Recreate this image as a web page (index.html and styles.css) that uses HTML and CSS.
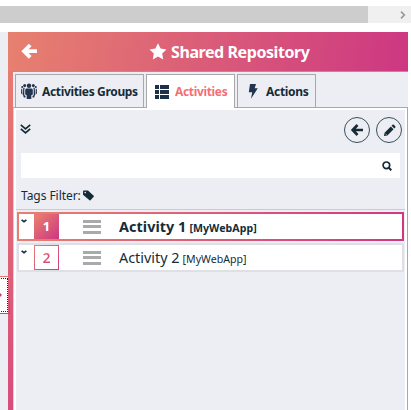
FILE: index.html
```html
<!DOCTYPE html>
<html lang="en">
<head>
<meta charset="utf-8">
<title>Shared Repository</title>
<link rel="stylesheet" href="styles.css">
</head>
<body>
<div class="scrollbar"><div class="thumb"></div><svg width="6" height="8" viewBox="0 0 6 8"><path d="M1 .7l3.3 3.3L1 7.3" fill="none" stroke="#999" stroke-width="1.7"/></svg></div>
<div class="main">
  <div class="gutter"><div class="handle"><svg width="3" height="6" viewBox="0 0 3 6"><path d="M0 1l2 2-2 2z" fill="#cf3a82"/></svg></div></div>
  <section class="panel">
    <header>
      <svg class="back" width="17" height="17" viewBox="0 0 17 17"><path d="M10.200 2L4 8.200l6.200 6.200M4.500 8.200H17" fill="none" stroke="#fff" stroke-width="3.800"/></svg>
      <svg class="star" width="18" height="17" viewBox="0 0 18 17"><path d="M9 .3l2.6 5.3 5.9.8-4.3 4.1 1 5.9L9 13.6l-5.2 2.8 1-5.9L.5 6.4l5.9-.8z" fill="#fff"/></svg>
      <h1>Shared Repository</h1>
    </header>
    <div class="body">
      <nav>
        <div class="tab groups"><svg width="16" height="17" viewBox="0 0 16 17" fill="#22344e"><circle cx="8" cy="2.800" r="2.200"/><circle cx="3.700" cy="2.500" r="1.500"/><circle cx="12.300" cy="2.500" r="1.500"/><circle cx="1.200" cy="4" r="1"/><circle cx="14.800" cy="4" r="1"/><path d="M5.200 5.500h5.600l1 1v5l-1.500.8V16H5.700v-3.700L4.200 11.500v-5zM2.300 4.700h1.600l-.6 1.300v6l1.200 1v1.500H2.800L1.800 11zM13.700 4.700h-1.600l.6 1.300v6l-1.200 1v1.500h1.700L14.200 11zM.3 5.700h1V12L0 10zM15.700 5.700h-1V12l1.300-2z"/></svg><span>Activities Groups</span></div>
        <div class="tab active"><svg width="14" height="14" viewBox="0 0 14 14" fill="#1d3049"><path d="M0 0h4v4H0zM5 0h9v4H5zM0 5h4v4H0zM5 5h9v4H5zM0 10h4v4H0zM5 10h9v4H5z"/></svg><span>Activities</span></div>
        <div class="tab actions"><svg width="10" height="15" viewBox="0 0 10 15"><path d="M2 0h6L6.700 4.200H9.800L3 14.700l1.200-6.500H.8z" fill="#22344e"/></svg><span>Actions</span></div>
      </nav>
      <div class="frame"><div class="content">
        <div class="toolbar">
          <svg class="expand" width="11" height="10" viewBox="0 0 11 10"><path d="M.8.8l4.700 4 4.700-4M.8 4.800l4.700 4 4.700-4" fill="none" stroke="#152b38" stroke-width="1.700"/></svg>
          <span class="round"><svg width="14" height="14" viewBox="0 0 14 14"><path d="M7.500 2L2.700 7l4.800 5M3 7h10" fill="none" stroke="#152b38" stroke-width="2.700"/></svg></span>
          <span class="round"><svg width="13" height="13" viewBox="0 0 14 14"><path d="M1 13l.7-3.700 6.700-6.700 3 3-6.700 6.700zM9.200 1.800l1-1q.8-.7 1.500 0l1.500 1.500q.7.700 0 1.500l-1 1z" fill="#152b38"/><path d="M2.700 10.500l.9.900" stroke="#edeef3"/></svg></span>
        </div>
        <div class="search"><svg width="10" height="10" viewBox="0 0 10 10" fill="none" stroke="#152b38"><circle cx="4.400" cy="4.300" r="3.300" stroke-width="1.700"/><path d="M6.500 6.500L9.300 9.300" stroke-width="2"/></svg></div>
        <div class="tags"><span>Tags Filter:</span><svg width="11" height="11" viewBox="0 0 11 11"><path d="M0 1.500Q0 .5 1 .5h4l5.700 5.200q.5.500 0 1L7.500 10.300q-.5.500-1 0L0 4.800z" fill="#152b38"/><circle cx="2.200" cy="2.600" r=".8" fill="#edeef3"/></svg></div>
        <div class="list">
          <div class="row selected"><svg class="chev" width="6" height="4" viewBox="0 0 6 4"><path d="M.6.800L3 2.700 5.400.800" fill="none" stroke="#152b38" stroke-width="1.500"/></svg><span class="num">1</span><span class="grip"><i></i><i></i><i></i></span><span class="name">Activity 1</span><span class="app">[MyWebApp]</span></div>
          <div class="row"><svg class="chev" width="6" height="4" viewBox="0 0 6 4"><path d="M.6.800L3 2.700 5.400.800" fill="none" stroke="#152b38" stroke-width="1.500"/></svg><span class="num"><b>2</b></span><span class="grip"><i></i><i></i><i></i></span><span class="name">Activity 2</span><span class="app">[MyWebApp]</span></div>
        </div>
      </div></div>
    </div>
  </section>
</div>
</body>
</html>
```
FILE: styles.css
```css
* { box-sizing: border-box; }
body { margin: 0; height: 410px; overflow: hidden; background: #fff; font-family: "Noto Sans", "Open Sans", sans-serif; color: #152b38; white-space: nowrap; }
svg { display: block; flex: none; }
.scrollbar { display: flex; align-items: center; height: 17px; margin: 6px 0 9px; background: #f0f0f0; }
.thumb { width: 368px; height: 17px; background: #cdcdcd; margin-right: 32px; }
.main { display: flex; height: 378px; }
.gutter { width: 8px; background: #edeef3; padding-top: 244px; }
.handle { position: relative; z-index: 1; width: 10px; height: 38px; border: 1px solid; border-left: 0; border-image: linear-gradient(135deg, #e88070, #cf3882) 1; background: linear-gradient(#fff, #fff) 0 0 / 8px 100% no-repeat; display: flex; align-items: center; }
.handle::after { content: ""; position: absolute; top: 1px; right: 1px; bottom: 1px; left: -3px; border: 1px dotted #222; }
.panel { width: 400px; background: linear-gradient(180deg, #e88070, #d84c7d); }
header { display: flex; align-items: center; height: 40px; padding: 0 0 1px 12px; background: linear-gradient(100deg, #e7816f, #cd3782); border-bottom: 1px solid #ef7674; }
.star { margin-left: 112px; }
h1 { margin: 2px 0 0 4px; color: #fff; font-size: 16px; line-height: 22px; font-weight: 700; letter-spacing: -.42px; }
.body { margin-left: 5px; height: 338px; background: #edeef3; display: flex; flex-direction: column; }
nav { display: flex; gap: 2px; padding: 2px 0 0 2px; height: 35px; }
.tab { display: flex; align-items: center; height: 34px; border: 1px solid #a8a8aa; border-bottom: 0; font-size: 12px; font-weight: 700; letter-spacing: -.34px; gap: 5px; padding-left: 5px; }
.groups { width: 129px; }
.active { width: 89px; height: 34px; padding-left: 8px; gap: 6px; background: #fff; color: #f56f72; position: relative; z-index: 1; }
.actions { width: 79px; padding-left: 10px; gap: 8px; letter-spacing: -.3px; }
.frame { flex: 1; border: 1px solid #a8a8aa; border-left-color: #d6d2d9; border-bottom: 0; background: #fff; padding: 2px 2px 0; }
.content { height: 100%; background: #edeef3; }
.toolbar { display: flex; align-items: center; height: 43px; padding: 0 3px 3px 4px; }
.expand { margin: -2px auto 0 0; }
.round { width: 26px; height: 26px; border: 1px solid #36505e; border-radius: 50%; display: grid; place-items: center; margin-left: 6px; }
.search { height: 25px; margin: 0 5px; background: #fff; display: flex; justify-content: flex-end; padding: 8px 8px; }
.tags { height: 31px; display: flex; gap: 2px; align-items: center; padding: 4px 0 0 5px; font-size: 12px; }
.tags span { letter-spacing: -.05px; }
.tags svg { margin-top: -1px; }
.list { border-top: 1px solid #ccccd0; padding: 2px 1px; }
.row { display: flex; align-items: center; height: 29px; border: 2px solid #dfe0e5; background: #fff; margin-bottom: 2px; }
.selected { border-image: linear-gradient(100deg, #e88070, #cf3882) 2; font-weight: 700; }
.chev { margin: 5px 0 0 2px; align-self: flex-start; }
.num { width: 25px; height: 25px; margin-left: 7px; text-align: center; font-size: 13px; line-height: 23px; font-weight: 700; border: 1px solid; border-image: linear-gradient(135deg, #e88070, #cf3882) 1; }
.selected .num { color: #fff; background: linear-gradient(135deg, #e88070, #cf3882); }
.num b { font-size: 14px; font-weight: 600; background: linear-gradient(135deg, #e88070, #cf3882); -webkit-background-clip: text; background-clip: text; color: transparent; }
.grip { width: 18px; height: 14px; margin: 0 18px 0 24px; display: flex; flex-direction: column; justify-content: space-between; }
.grip i { height: 3px; background: #aaa; }
.name { font-size: 14.4px; }
.selected .name { letter-spacing: .05px; }
.app { font-size: 10.6px; margin: 3px 0 0 3px; }
.selected .app { letter-spacing: .05px; }
```
